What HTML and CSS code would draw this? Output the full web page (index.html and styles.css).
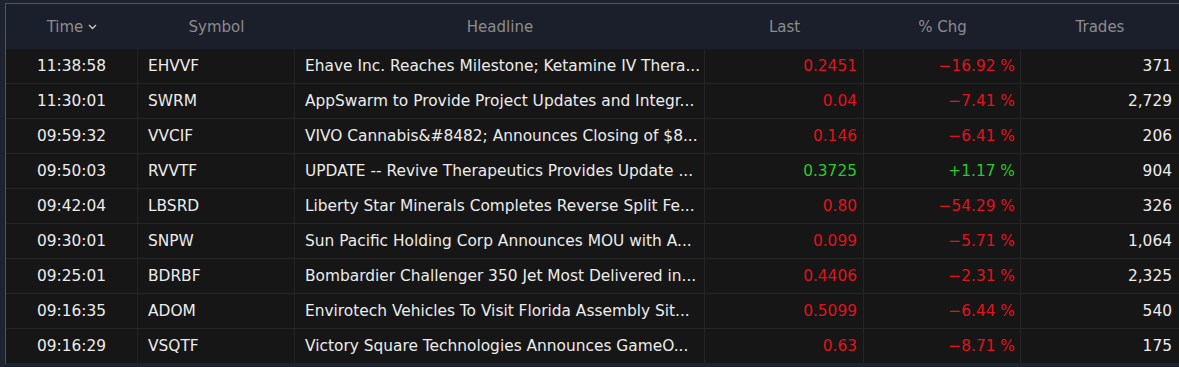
FILE: index.html
```html
<!DOCTYPE html>
<html>
<head>
<meta charset="utf-8">
<link rel="stylesheet" href="styles.css">
</head>
<body>
<div class="frame">
  <div class="panel">
    <div class="row head">
      <div class="cell c-time">Time <svg class="chev" width="9" height="6" viewBox="0 0 9 6"><path d="M1 1 L4.5 4.5 L8 1" fill="none" stroke="#c8c8c8" stroke-width="1.3"/></svg></div>
      <div class="cell c-sym">Symbol</div>
      <div class="cell c-head">Headline</div>
      <div class="cell c-last">Last</div>
      <div class="cell c-chg">% Chg</div>
      <div class="cell c-trades">Trades</div>
    </div>
    <div class="row">
      <div class="cell c-time">11:38:58</div><div class="cell c-sym">EHVVF</div>
      <div class="cell c-head">Ehave Inc. Reaches Milestone; Ketamine IV Thera...</div>
      <div class="cell c-last red">0.2451</div><div class="cell c-chg red">−16.92 %</div><div class="cell c-trades">371</div>
    </div>
    <div class="row">
      <div class="cell c-time">11:30:01</div><div class="cell c-sym">SWRM</div>
      <div class="cell c-head">AppSwarm to Provide Project Updates and Integr...</div>
      <div class="cell c-last red">0.04</div><div class="cell c-chg red">−7.41 %</div><div class="cell c-trades">2,729</div>
    </div>
    <div class="row">
      <div class="cell c-time">09:59:32</div><div class="cell c-sym">VVCIF</div>
      <div class="cell c-head">VIVO Cannabis&amp;#8482; Announces Closing of $8...</div>
      <div class="cell c-last red">0.146</div><div class="cell c-chg red">−6.41 %</div><div class="cell c-trades">206</div>
    </div>
    <div class="row">
      <div class="cell c-time">09:50:03</div><div class="cell c-sym">RVVTF</div>
      <div class="cell c-head">UPDATE -- Revive Therapeutics Provides Update ...</div>
      <div class="cell c-last green">0.3725</div><div class="cell c-chg green">+1.17 %</div><div class="cell c-trades">904</div>
    </div>
    <div class="row">
      <div class="cell c-time">09:42:04</div><div class="cell c-sym">LBSRD</div>
      <div class="cell c-head">Liberty Star Minerals Completes Reverse Split Fe...</div>
      <div class="cell c-last red">0.80</div><div class="cell c-chg red">−54.29 %</div><div class="cell c-trades">326</div>
    </div>
    <div class="row">
      <div class="cell c-time">09:30:01</div><div class="cell c-sym">SNPW</div>
      <div class="cell c-head">Sun Pacific Holding Corp Announces MOU with A...</div>
      <div class="cell c-last red">0.099</div><div class="cell c-chg red">−5.71 %</div><div class="cell c-trades">1,064</div>
    </div>
    <div class="row">
      <div class="cell c-time">09:25:01</div><div class="cell c-sym">BDRBF</div>
      <div class="cell c-head">Bombardier Challenger 350 Jet Most Delivered in...</div>
      <div class="cell c-last red">0.4406</div><div class="cell c-chg red">−2.31 %</div><div class="cell c-trades">2,325</div>
    </div>
    <div class="row">
      <div class="cell c-time">09:16:35</div><div class="cell c-sym">ADOM</div>
      <div class="cell c-head">Envirotech Vehicles To Visit Florida Assembly Sit...</div>
      <div class="cell c-last red">0.5099</div><div class="cell c-chg red">−6.44 %</div><div class="cell c-trades">540</div>
    </div>
    <div class="row">
      <div class="cell c-time">09:16:29</div><div class="cell c-sym">VSQTF</div>
      <div class="cell c-head">Victory Square Technologies Announces GameO...</div>
      <div class="cell c-last red">0.63</div><div class="cell c-chg red">−8.71 %</div><div class="cell c-trades">175</div>
    </div>
  </div>
</div>
</body>
</html>
```
FILE: styles.css
```css
html, body {
  margin: 0;
  padding: 0;
  background: #1d2430;
  height: 367px;
  overflow: hidden;
}
.frame {
  padding: 3px 0 0 5px;
}
.panel {
  border-top: 1px solid #4b5467;
  border-left: 1px solid #4b5467;
  background: #161616;
  font-family: "DejaVu Sans", sans-serif;
  font-size: 15.4px;
  color: #ececec;
}
.row {
  display: grid;
  grid-template-columns: 132px 157px 410px 159px 157px 1fr;
  height: 34px;
  border-bottom: 1px solid #242424;
}
.row.head {
  height: 45px;
  background: #1b1f2b;
  border-bottom: none;
  color: #8c8c8c;
  font-size: 15px;
}
.cell {
  display: flex;
  align-items: center;
  white-space: nowrap;
  overflow: hidden;
  border-right: 1px solid #242424;
}
.head .cell {
  border-right: none;
  justify-content: center;
  padding: 0;
}
.c-time { justify-content: center; }
.c-sym, .c-head { padding-left: 10px; }
.c-last, .c-chg, .c-trades { justify-content: flex-end; }
.c-last { padding-right: 6px; }
.c-chg { padding-right: 5px; }
.c-trades { padding-right: 7px; border-right: none; }
.chev { margin-left: 5px; margin-top: 1px; }
.red { color: #e0121c; }
.green { color: #2ac82a; }
```
